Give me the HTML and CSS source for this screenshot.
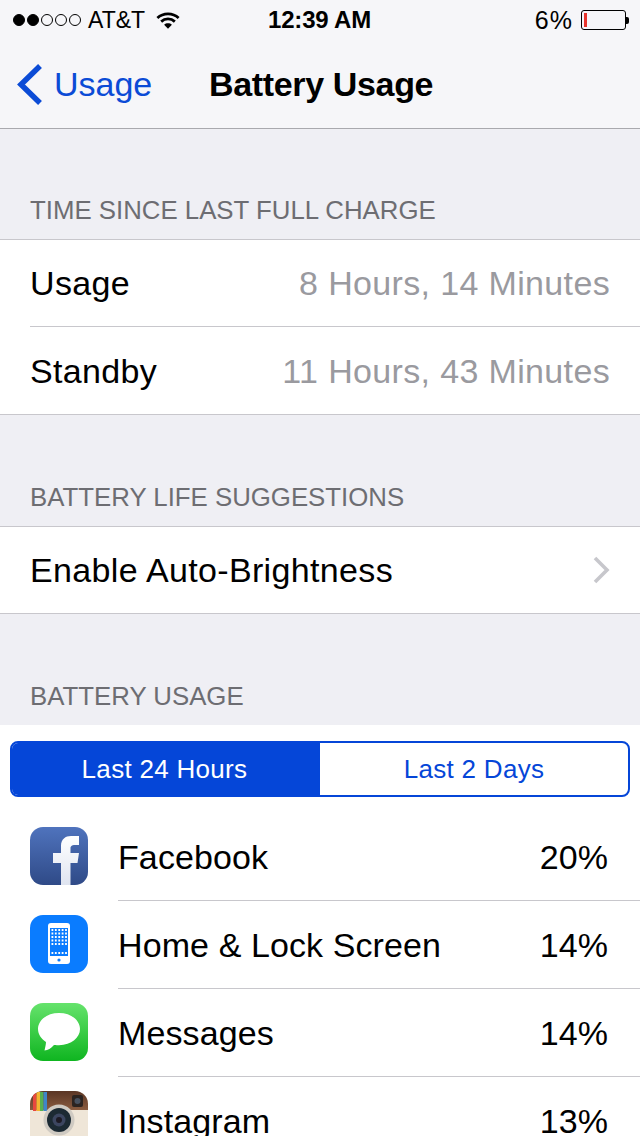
FILE: index.html
```html
<!doctype html>
<html lang="en">
<head>
  <meta charset="utf-8" />
  <meta name="viewport" content="width=device-width, initial-scale=1" />
  <title>Battery Usage</title>
  <link rel="stylesheet" href="styles.css">
</head>

<body>
  <main class="screen">
    <header class="topBar">
      <div class="status">
        <div class="statusLeft">
          <span class="signal">
            <i class="dot on"></i><i class="dot on"></i><i class="dot"></i><i class="dot"></i><i class="dot"></i>
          </span>
          <span class="carrier">AT&amp;T</span>
          <svg class="wifi" width="24" height="19" viewBox="0 0 26 20" aria-hidden="true">
            <path d="M1.5 7.2C7.8 1.2 18.2 1.2 24.5 7.2" fill="none" stroke="#000" stroke-width="3"/>
            <path d="M5.6 11.2C9.8 7.4 16.2 7.4 20.4 11.2" fill="none" stroke="#000" stroke-width="3"/>
            <path d="M13 19 8.8 14.6C11.2 12.6 14.8 12.6 17.2 14.6Z" fill="#000"/>
          </svg>
        </div>
        <div class="clock">12:39 AM</div>
        <div class="statusRight">
          <span class="pct">6%</span>
          <span class="battery"><i class="charge"></i></span>
          <i class="batteryTip"></i>
        </div>
      </div>
      <nav class="nav">
        <a class="back">
          <svg width="28" height="42" viewBox="0 0 28 42" aria-hidden="true">
            <path d="M24 3 5 21.5 24 40" fill="none" stroke="#0b4bd6" stroke-width="5.5"/>
          </svg>
          <span>Usage</span>
        </a>
        <h1>Battery Usage</h1>
      </nav>
    </header>

    <p class="sectionLabel first">TIME SINCE LAST FULL CHARGE</p>
    <section class="group">
      <div class="row">
        <span>Usage</span>
        <span class="detail">8 Hours, 14 Minutes</span>
      </div>
      <div class="row">
        <span>Standby</span>
        <span class="detail">11 Hours, 43 Minutes</span>
      </div>
    </section>

    <p class="sectionLabel">BATTERY LIFE SUGGESTIONS</p>
    <section class="group">
      <div class="row">
        <span>Enable Auto-Brightness</span>
        <svg class="chevron" width="18" height="28" viewBox="0 0 18 28" aria-hidden="true">
          <path d="M3 2 15 14 3 26" fill="none" stroke="#c7c7cc" stroke-width="3.6"/>
        </svg>
      </div>
    </section>

    <p class="sectionLabel">BATTERY USAGE</p>
    <section class="usage">
      <div class="segments">
        <div class="segment active">Last 24 Hours</div>
        <div class="segment">Last 2 Days</div>
      </div>

      <div class="appRow">
        <span class="icon fb">
          <svg width="58" height="58" viewBox="0 0 58 58" aria-hidden="true">
            <defs>
              <linearGradient id="fbF" x1="0" y1="0" x2="0" y2="1">
                <stop offset="0" stop-color="#fff"/>
                <stop offset="1" stop-color="#dfe4f0"/>
              </linearGradient>
            </defs>
            <path d="M31 58V36H23V26H31V19C31 12 35.5 9 41 9H49V18H45C41.5 18 40.5 19.5 40.5 21V26H49L47.5 36H40.5V58Z" fill="url(#fbF)"/>
          </svg>
        </span>
        <div class="appBody"><span>Facebook</span><span>20%</span></div>
      </div>

      <div class="appRow">
        <span class="icon home">
          <svg width="58" height="58" viewBox="0 0 58 58" aria-hidden="true">
            <rect x="18" y="8" width="22" height="41" rx="3" fill="#fff"/>
            <rect x="20" y="13" width="18" height="28" fill="#0a7cff"/>
            <path d="M21.5 15H37M21.5 18.5H37M21.5 22H37M21.5 25.5H37M21.5 29H37M21.5 38H37" stroke="#fff" stroke-width="1.8" stroke-dasharray="1.8 1.6" fill="none"/>
            <circle cx="29" cy="45" r="1.6" fill="#0a7cff"/>
          </svg>
        </span>
        <div class="appBody"><span>Home &amp; Lock Screen</span><span>14%</span></div>
      </div>

      <div class="appRow">
        <span class="icon msg">
          <svg width="58" height="58" viewBox="0 0 58 58" aria-hidden="true">
            <path d="M29 10C16.5 10 8 17.5 8 26C8 31.5 11.5 36 16 39C16 41.500 15 45 14.500 47.500C18 47.500 21 45 24 42C26 42.100 28 42.200 29 42.200C41.5 42.200 50 34.5 50 26C50 17.5 41.5 10 29 10Z" fill="#fff"/>
          </svg>
        </span>
        <div class="appBody"><span>Messages</span><span>14%</span></div>
      </div>

      <div class="appRow">
        <span class="icon insta">
          <svg width="58" height="58" viewBox="0 0 58 58" aria-hidden="true">
            <defs>
              <linearGradient id="igTop" x1="0" y1="0" x2="0" y2="1">
                <stop offset="0" stop-color="#5a3524"/>
                <stop offset="1" stop-color="#8a5c40"/>
              </linearGradient>
            </defs>
            <rect width="58" height="58" fill="#efe6d8"/>
            <rect width="58" height="19" fill="url(#igTop)"/>
            <rect x="3" y="1" width="3.5" height="19" fill="#e8483f"/>
            <rect x="6.5" y="1" width="3.5" height="19" fill="#f2b632"/>
            <rect x="10" y="1" width="3.5" height="19" fill="#58b050"/>
            <rect x="13.5" y="1" width="3.5" height="19" fill="#3f86c8"/>
            <rect x="42" y="4" width="11" height="12" rx="2" fill="#2b2320"/>
            <circle cx="47.5" cy="10" r="3" fill="#47505e"/>
            <circle cx="29" cy="29" r="15.5" fill="#cfcac2"/>
            <circle cx="29" cy="29" r="12" fill="#1c2a33"/>
            <circle cx="29" cy="29" r="6.5" fill="#3c4660"/>
            <circle cx="29" cy="29" r="3" fill="#1d1a24"/>
          </svg>
        </span>
        <div class="appBody"><span>Instagram</span><span>13%</span></div>
      </div>
    </section>
  </main>
</body>
</html>
```

FILE: styles.css
```css
:root{
  --bg:#efeff4;
  --bar:#f6f6f9;
  --line:#c8c7cc;
  --blue:#0b4bd6;
  --segBlue:#0546d8;
  --muted:#6d6d72;
  --grey:#9a9a9f;
}

*{ box-sizing:border-box; }
html, body{ height:100%; }
body{
  margin:0;
  background:var(--bg);
  color:#000;
  font-family:"Liberation Sans", Arial, sans-serif;
  overflow:hidden;
}

.screen{
  width:640px;
  height:1136px;
  overflow:hidden;
}

.topBar{
  background:var(--bar);
  border-bottom:1px solid #a9a9ae;
  height:129px;
}

.status{
  height:40px;
  display:grid;
  grid-template-columns:1fr auto 1fr;
  align-items:center;
  padding:0 11px 0 13px;
  font-size:23px;
}
.statusLeft{
  display:flex;
  align-items:center;
}
.signal{
  display:flex;
  gap:2px;
  margin-right:7px;
}
.dot{
  width:12px;
  height:12px;
  border-radius:50%;
  border:1px solid #000;
}
.dot.on{ background:#000; }
.wifi{ margin-left:11px; }
.clock{
  font-weight:700;
  font-size:24px;
  letter-spacing:-.2px;
  margin-right:3px;
}
.statusRight{
  display:flex;
  align-items:center;
  justify-content:flex-end;
}
.pct{
  margin-right:8px;
  font-size:25px;
  letter-spacing:1px;
}
.battery{
  width:45px;
  height:20px;
  border:1px solid #000;
  border-radius:3px;
  padding:2px;
  display:block;
}
.charge{
  display:block;
  width:3px;
  height:100%;
  background:#e8352e;
}
.batteryTip{
  width:3px;
  height:7px;
  background:#000;
  border-radius:0 2px 2px 0;
}

.nav{
  height:88px;
  display:flex;
  align-items:center;
  padding:0 0 0 16px;
}
.back{
  display:flex;
  align-items:center;
  gap:10px;
  color:var(--blue);
  font-size:34px;
  width:193px;
}
.nav h1{
  margin:0;
  font-size:34px;
  font-weight:700;
  letter-spacing:-.35px;
}

.sectionLabel{
  margin:0;
  height:111px;
  padding:0 30px 13px;
  display:flex;
  align-items:flex-end;
  font-size:25.8px;
  line-height:32px;
  color:var(--muted);
}
.sectionLabel.first{ height:110px; }

.group{
  background:#fff;
  border-top:1px solid var(--line);
  border-bottom:1px solid var(--line);
}
.row{
  height:86px;
  margin-left:30px;
  padding-right:30px;
  display:flex;
  align-items:center;
  justify-content:space-between;
  font-size:34px;
  letter-spacing:.35px;
}
.row + .row{
  border-top:1px solid var(--line);
  height:88px;
  padding-top:1px;
}
.detail{ color:var(--grey); }

.usage{
  background:#fff;
  padding-top:16px;
}
.segments{
  display:grid;
  grid-template-columns:308px 1fr;
  height:56px;
  margin:0 10px 16px;
  border:2px solid var(--segBlue);
  border-radius:8px;
  overflow:hidden;
  font-size:26px;
  letter-spacing:.3px;
  color:var(--segBlue);
}
.segment{
  display:flex;
  align-items:center;
  justify-content:center;
}
.segment.active{
  background:var(--segBlue);
  color:#fff;
  padding-right:3px;
}

.appRow{
  height:88px;
  display:flex;
  align-items:center;
  padding-left:30px;
  font-size:34px;
  letter-spacing:.1px;
}
.icon{
  width:58px;
  height:58px;
  border-radius:13px;
  overflow:hidden;
  flex:none;
  margin:0 30px 2px 0;
}
.icon svg{ display:block; }
.fb{ background:linear-gradient(180deg, #4f73bd, #2f4a87); }
.home{ background:#0a7cff; }
.msg{ background:linear-gradient(180deg, #66e36c, #0fb520); }
.appBody{
  flex:1;
  height:100%;
  display:flex;
  align-items:center;
  justify-content:space-between;
  padding:2px 32px 0 0;
  border-bottom:1px solid var(--line);
}
```
